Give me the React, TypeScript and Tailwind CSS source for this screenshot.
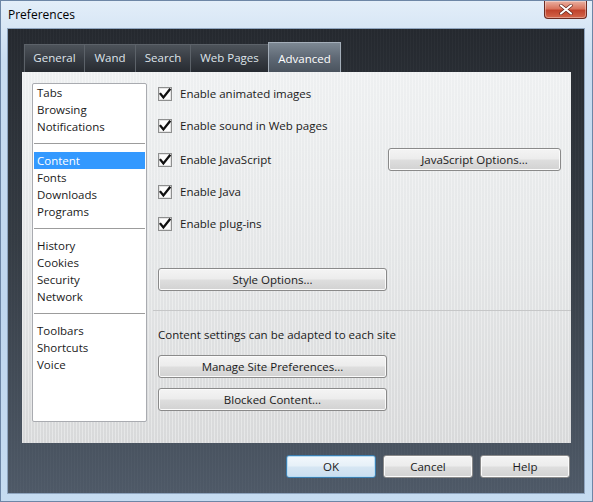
import React from "react";

const font = "font-['Open_Sans','Noto_Sans',sans-serif]";

const tabs = [
  { label: "General", w: "w-[61px]" },
  { label: "Wand", w: "w-[52px]" },
  { label: "Search", w: "w-[56px]" },
  { label: "Web Pages", w: "w-[79px]" },
];

const sections = [
  ["Tabs", "Browsing", "Notifications"],
  ["Content", "Fonts", "Downloads", "Programs"],
  ["History", "Cookies", "Security", "Network"],
  ["Toolbars", "Shortcuts", "Voice"],
];

function Check() {
  return (
    <svg width="14" height="14" viewBox="0 0 14 14" className="shrink-0">
      <rect x="0.5" y="0.5" width="13" height="13" fill="#fdfdfd" stroke="#8e8f8f" />
      <rect x="1.5" y="1.5" width="11" height="11" fill="none" stroke="#e4e4e4" />
      <path d="M2.6 7 L5.4 10.4 L11.6 2.6" fill="none" stroke="#111" strokeWidth="2.3" strokeLinecap="square" />
    </svg>
  );
}

function CheckRow({ label, className = "" }: { label: string; className?: string }) {
  return (
    <div className={`flex h-[16px] items-center gap-[8px] ${className}`}>
      <Check />
      <span className="text-[11.5px] leading-[16px] text-[#1a1a1a]">{label}</span>
    </div>
  );
}

function Btn({ children, className = "" }: { children: React.ReactNode; className?: string }) {
  return (
    <div
      className={`flex h-[23px] items-center justify-center rounded-[3px] border border-[#8a8a8a] bg-[linear-gradient(180deg,#f4f4f4_0%,#ececec_48%,#dedede_52%,#d2d2d2_100%)] text-[11.5px] text-[#1a1a1a] shadow-[inset_0_0_0_1px_#fbfbfb] ${className}`}
    >
      {children}
    </div>
  );
}

export default function App() {
  return (
    <div
      className={`flex h-[502px] w-[593px] flex-col border border-[#6d86a6] bg-[linear-gradient(180deg,#e3eef9_0%,#c9ddf1_12%,#bfd6ee_60%,#c6dcf1_100%)] ${font}`}
    >
      {/* Title bar */}
      <div className="flex h-[27px] items-start justify-between">
        <span className="pl-[7px] pt-[6px] text-[12px] leading-[16px] text-black">Preferences</span>
        <div className="mr-[5px] flex h-[18px] w-[43px] items-center justify-center rounded-b-[4px] border border-t-0 border-[#6b2b22] bg-[linear-gradient(180deg,#eab1a2_0%,#d9745d_45%,#c0432c_55%,#d4664b_100%)] shadow-[inset_0_0_0_1px_rgba(255,255,255,0.35)]">
          <svg width="14" height="11" viewBox="0 0 14 11">
            <path d="M2 1.5 L12 9.5 M12 1.5 L2 9.5" stroke="#5a1d14" strokeWidth="3.4" strokeLinecap="round" />
            <path d="M2 1.5 L12 9.5 M12 1.5 L2 9.5" stroke="#ffffff" strokeWidth="2.2" strokeLinecap="round" />
          </svg>
        </div>
      </div>

      {/* Dark client area */}
      <div className="ml-[6px] flex h-[466px] w-[578px] flex-col border border-[#8fa5bf] bg-[repeating-linear-gradient(90deg,rgba(255,255,255,0.025)_0px,rgba(255,255,255,0.025)_1px,transparent_1px,transparent_3px),linear-gradient(180deg,#25292f_0%,#343b43_45%,#4e5967_100%)] pl-[14px] pr-[13px]">
        {/* Tabs */}
        <div className="mt-[13px] flex h-[30px] items-end pl-[2px]">
          {tabs.map((t, i) => (
            <div
              key={t.label}
              className={`flex h-[28px] items-center justify-center border border-b-0 border-[#5c6269] bg-[linear-gradient(180deg,#4d535a_0%,#383d44_50%,#272b31_100%)] pb-[1px] text-[11.5px] text-[#dfe4ea] ${t.w} ${i > 0 ? "-ml-px" : ""}`}
            >
              {t.label}
            </div>
          ))}
          <div className="-ml-px flex h-[30px] w-[73px] items-center justify-center border border-b-0 border-[#a4aeb9] bg-[linear-gradient(180deg,#7d8893_0%,#5f6975_50%,#4a535e_100%)] pt-[2px] text-[11.5px] text-white">
            Advanced
          </div>
        </div>

        {/* Panel */}
        <div className="flex h-[371px] items-start bg-[repeating-linear-gradient(90deg,rgba(255,255,255,0.35)_0px,rgba(255,255,255,0.35)_1px,transparent_1px,transparent_3px),linear-gradient(180deg,#eef0f1_0%,#e4e6e7_50%,#d8d9da_100%)] pl-[10px]">
          {/* Category list */}
          <div className="mt-[11px] flex h-[339px] w-[115px] flex-col rounded-[2px] border border-[#a9abb0] bg-white px-px">
            {sections.map((s, si) => (
              <div
                key={si}
                className={`flex flex-col ${si > 0 ? "border-t border-[#9c9c9c] pt-[8px]" : ""} ${si < sections.length - 1 ? "pb-[8px]" : ""}`}
              >
                {s.map(item => (
                  <div
                    key={item}
                    className={`h-[17px] pl-[3px] text-[11.5px] leading-[17px] ${item === "Content" ? "bg-[#3399ff] text-white" : "text-[#1a1a1a]"}`}
                  >
                    {item}
                  </div>
                ))}
              </div>
            ))}
          </div>

          {/* Options */}
          <div className="ml-[11px] flex w-[403px] flex-col">
            <CheckRow label="Enable animated images" className="mt-[14px]" />
            <CheckRow label="Enable sound in Web pages" className="mt-[16px]" />
            <div className="mt-[14px] flex h-[23px] items-center justify-between">
              <CheckRow label="Enable JavaScript" />
              <Btn className="w-[173px]">JavaScript Options...</Btn>
            </div>
            <CheckRow label="Enable Java" className="mt-[13px]" />
            <CheckRow label="Enable plug-ins" className="mt-[16px]" />
            <Btn className="mt-[36px] w-[229px]">Style Options...</Btn>
            <div className="-ml-[5px] -mr-[10px] mt-[19px] h-px bg-[#c6c7c8]" />
            <div className="mt-[16px] h-[16px] text-[11.5px] leading-[16px] text-[#1a1a1a]">
              Content settings can be adapted to each site
            </div>
            <Btn className="mt-[12px] w-[229px]">Manage Site Preferences...</Btn>
            <Btn className="mt-[10px] w-[229px]">Blocked Content...</Btn>
          </div>
        </div>

        {/* Dialog buttons */}
        <div className="mt-[12px] flex justify-end gap-[7px] pr-px">
          <div className="flex h-[23px] w-[90px] items-center justify-center rounded-[3px] border border-[#3c7fb1] bg-[linear-gradient(180deg,#f3f8fc_0%,#e6f0f8_48%,#d6e6f3_52%,#cadef0_100%)] text-[11.5px] text-[#1a1a1a] shadow-[inset_0_0_0_1px_#b9dcf3]">
            OK
          </div>
          <Btn className="w-[90px]">Cancel</Btn>
          <Btn className="w-[90px]">Help</Btn>
        </div>
      </div>
    </div>
  );
}
